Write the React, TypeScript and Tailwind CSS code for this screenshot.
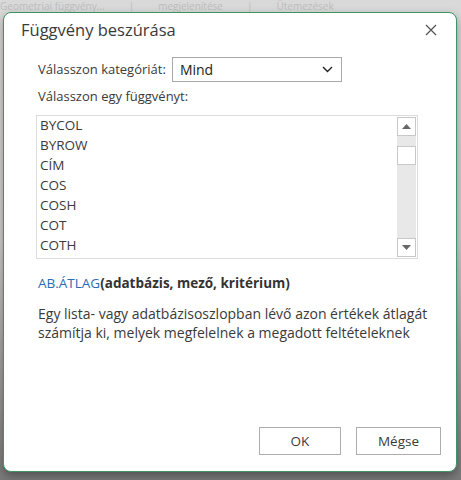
import React from "react";

const font = { fontFamily: '"Open Sans", "Noto Sans", sans-serif' };

export default function App() {
  const items = ["BYCOL", "BYROW", "CÍM", "COS", "COSH", "COT", "COTH"];
  return (
    <div
      className="relative h-[480px] w-[461px] overflow-hidden bg-gradient-to-b from-[#d9d9d9] via-[#cfcfcf] to-[#7a7a7a]"
      style={font}
    >
      <div className="absolute left-0 top-0 flex gap-6 whitespace-nowrap text-[10px] leading-[12px] text-[#bdbdbd]">
        <span>Geometriai függvény...</span>
        <span>|</span>
        <span>megjelenítése</span>
        <span>|</span>
        <span>Ütemezések</span>
      </div>
      <div className="relative ml-[3px] mt-[12px] flex h-[460px] w-[454px] flex-col rounded-[8px] border border-[#3f9466] bg-white text-[#3a3a3a] shadow-[0_4px_10px_rgba(0,0,0,0.35)]">
        <div className="flex items-center justify-between pl-[17px] pr-[17px] pt-[5px]">
          <span className="text-[16.5px] text-[#3a3a3a]">Függvény beszúrása</span>
          <svg width="12" height="12" viewBox="0 0 12 12" className="mr-[2px]">
            <path d="M1 1 L11 11 M11 1 L1 11" stroke="#555" strokeWidth="1.3" />
          </svg>
        </div>
        <div className="mt-[14px] flex items-center pl-[34px] text-[13px]">
          <span className="mr-[6px]">Válasszon kategóriát:</span>
          <div className="flex h-[25px] w-[170px] items-center justify-between border border-[#a8a8a8] pl-[7px] pr-[8px]">
            <span className="text-[14px] text-[#222]">Mind</span>
            <svg width="11" height="7" viewBox="0 0 11 7">
              <path d="M1 1 L5.5 5.5 L10 1" stroke="#222" strokeWidth="1.4" fill="none" />
            </svg>
          </div>
        </div>
        <div className="mt-[5px] pl-[34px] text-[13px]">Válasszon egy függvényt:</div>
        <div className="ml-[32px] mt-[9px] flex h-[144px] w-[382px] border border-[#dcdcdc]">
          <div className="relative flex-1 overflow-hidden">
            <div className="absolute left-[3px] top-[-1px] flex flex-col">
              {items.map((it) => (
                <div key={it} className="h-[20px] text-[13.5px] leading-[20px] text-[#3a3a3a]">
                  {it}
                </div>
              ))}
            </div>
          </div>
          <div className="my-[1px] mr-[1px] flex w-[19px] flex-col bg-[#e8e8e8]">
            <div className="flex h-[19px] items-center justify-center border border-[#c8c8c8] bg-white">
              <svg width="9" height="5" viewBox="0 0 9 5">
                <path d="M0 5 L4.5 0 L9 5 Z" fill="#666" />
              </svg>
            </div>
            <div className="mt-[10px] h-[19px] border border-[#c8c8c8] bg-white" />
            <div className="flex-1" />
            <div className="flex h-[19px] items-center justify-center border border-[#c8c8c8] bg-white">
              <svg width="9" height="5" viewBox="0 0 9 5">
                <path d="M0 0 L4.5 5 L9 0 Z" fill="#666" />
              </svg>
            </div>
          </div>
        </div>
        <div className="mt-[14px] pl-[34px] text-[13.5px]">
          <span className="text-[#2b6cb5]">AB.ÁTLAG</span>
          <span className="font-bold text-[#333]">(adatbázis, mező, kritérium)</span>
        </div>
        <div className="mt-[10px] pl-[34px] pr-[4px] text-[14px] leading-[19px] text-[#3a3a3a] whitespace-nowrap">
          Egy lista- vagy adatbázisoszlopban lévő azon értékek átlagát
          <br />
          számítja ki, melyek megfelelnek a megadott feltételeknek
        </div>
        <div className="flex-1" />
        <div className="mb-[16px] flex justify-end gap-[15px] pr-[15px]">
          <div className="flex h-[28px] w-[82px] items-center justify-center border border-[#adadad] text-[13.5px]">
            OK
          </div>
          <div className="flex h-[28px] w-[85px] items-center justify-center border border-[#adadad] text-[13.5px]">
            Mégse
          </div>
        </div>
      </div>
    </div>
  );
}
